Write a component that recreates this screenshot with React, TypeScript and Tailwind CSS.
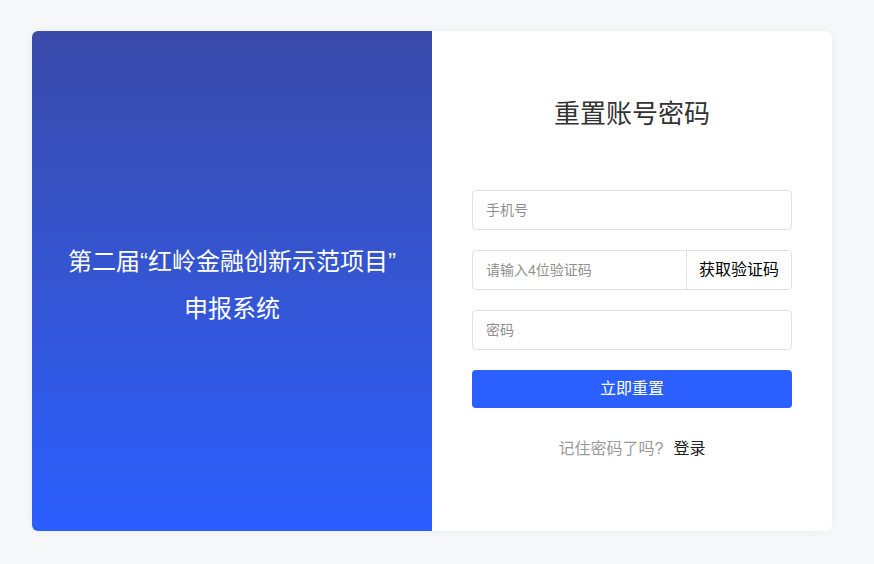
import React from 'react';

const font = { fontFamily: '"Liberation Sans", "Noto Sans CJK SC", sans-serif' };

export default function App() {
  return (
    <div className="w-full min-h-[564px] bg-[#f7f8fa] pt-[31px] pl-[32px]" style={font}>
      <div className="flex w-[800px] h-[500px] rounded-[6px] overflow-hidden bg-white shadow-[0_0_12px_rgba(0,0,0,0.06)]">
        {/* left banner */}
        <div className="w-[400px] h-full bg-gradient-to-b from-[#394aa9] to-[#2b5fff] flex flex-col items-center justify-center text-white text-[24px] leading-[47px] pt-[8px]">
          <div>第二届“红岭金融创新示范项目”</div>
          <div>申报系统</div>
        </div>

        {/* right form */}
        <div className="flex-1 px-[40px] pt-[66px] flex flex-col">
          <h1 className="text-center text-[26px] leading-[34px] text-[#333]">重置账号密码</h1>

          <div className="mt-[59px] flex flex-col gap-[20px]">
            <input
              className="h-[40px] w-full border border-[#dcdfe6] rounded-[4px] px-[13px] text-[14px] text-[#333] placeholder:text-[#8f8f8f] outline-none"
              placeholder="手机号"
            />
            <div className="flex h-[40px] border border-[#dcdfe6] rounded-[4px] overflow-hidden">
              <input
                className="flex-1 min-w-0 px-[13px] text-[14px] text-[#333] placeholder:text-[#8f8f8f] outline-none"
                placeholder="请输入4位验证码"
              />
              <button className="w-[105px] border-l border-[#dcdfe6] text-[16px] text-black bg-white">
                获取验证码
              </button>
            </div>
            <input
              type="text"
              className="h-[40px] w-full border border-[#dcdfe6] rounded-[4px] px-[13px] text-[14px] text-[#333] placeholder:text-[#8f8f8f] outline-none"
              placeholder="密码"
            />
            <button className="h-[38px] w-full rounded-[4px] bg-[#2b5fff] text-white text-[16px]">
              立即重置
            </button>
          </div>

          <div className="mt-[30px] text-center text-[16px] leading-[22px]">
            <span className="text-[#999]">记住密码了吗?</span>
            <span className="text-[#222] ml-[10px]">登录</span>
          </div>
        </div>
      </div>
    </div>
  );
}
